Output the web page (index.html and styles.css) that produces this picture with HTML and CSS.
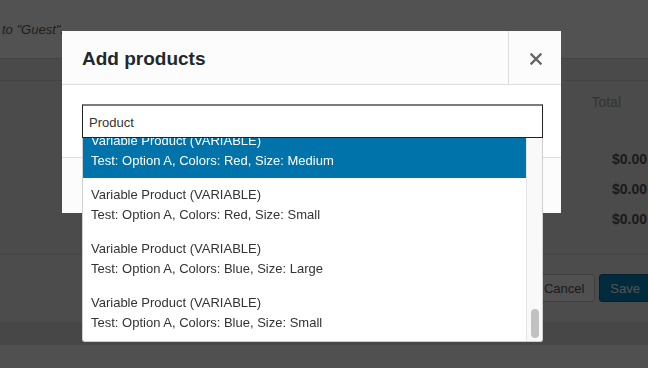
FILE: index.html
```html
<!DOCTYPE html>
<html>
<head>
    <title>Add products</title>
    <link rel="stylesheet" href="styles.css">
</head>
<body>
    <div class="page">
        <div class="page-top">
            <div class="note"><em>to "Guest".</em></div>
        </div>
        <div class="table-head"></div>
        <div class="items">
            <div class="row row-head"><span class="total-label">Total</span></div>
            <div class="row"><span class="price">$0.00</span></div>
            <div class="row"><span class="price">$0.00</span></div>
            <div class="row"><span class="price">$0.00</span></div>
        </div>
        <div class="actions">
            <button class="btn">Cancel</button>
            <button class="btn btn-primary">Save</button>
        </div>
        <div class="page-band"></div>
        <div class="page-bottom"></div>
    </div>

    <div class="backdrop"></div>

    <div class="modal">
        <div class="modal-head">
            <h1>Add products</h1>
            <button class="modal-close" aria-label="Close">
                <svg width="12" height="12" viewBox="0 0 12 12">
                    <path d="M1.5 1.5 L10.5 10.5 M10.5 1.5 L1.5 10.5" stroke="#666" stroke-width="2.4" stroke-linecap="square"/>
                </svg>
            </button>
        </div>
        <div class="modal-body">
            <div class="search">
                <input class="search-input" type="text" value="Product">
                <div class="results">
                    <ul class="results-list">
                        <li class="result is-active">Variable Product (VARIABLE)<br>Test: Option A, Colors: Red, Size: Medium</li>
                        <li class="result">Variable Product (VARIABLE)<br>Test: Option A, Colors: Red, Size: Small</li>
                        <li class="result">Variable Product (VARIABLE)<br>Test: Option A, Colors: Blue, Size: Large</li>
                        <li class="result">Variable Product (VARIABLE)<br>Test: Option A, Colors: Blue, Size: Small</li>
                    </ul>
                    <div class="scroll-track"><div class="scroll-thumb"></div></div>
                </div>
            </div>
        </div>
        <div class="modal-foot"></div>
    </div>
</body>
</html>
```

FILE: styles.css
```css
body {
    margin: 0;
    font-family: "Liberation Sans", Arial, sans-serif;
    font-size: 13px;
    color: #333;
}

/* Page behind the modal */
.page {
    width: 648px;
    height: 368px;
    overflow: hidden;
    background: #f7f7f7;
}
.page-top {
    height: 58px;
    background: #fff;
    padding: 22px 0 0 2px;
    box-sizing: border-box;
}
.note {
    white-space: nowrap;
    color: #5e5e5e;
    line-height: 16px;
}
.table-head {
    height: 21px;
    background: #e7e7e7;
    border-top: 1px solid #d4d4d4;
    border-bottom: 1px solid #d4d4d4;
}
.items {
    height: 174px;
    background: #eaeaea;
    border-bottom: 1px solid #d4d4d4;
    padding-top: 11px;
    box-sizing: border-box;
}
.row {
    display: flex;
    justify-content: flex-end;
    height: 30px;
    line-height: 30px;
}
.row-head {
    height: 20px;
    line-height: 20px;
    margin-bottom: 32px;
}
.total-label {
    margin-right: 27px;
    color: #a0a0a0;
    font-size: 14px;
}
.price {
    margin-right: 1px;
    font-size: 14px;
    font-weight: bold;
    color: #555;
}
.actions {
    height: 67px;
    background: #ededed;
    display: flex;
    justify-content: flex-end;
    align-items: flex-start;
    gap: 4px;
    padding-top: 19px;
    margin-right: -3px;
    box-sizing: border-box;
}
.btn {
    height: 28px;
    padding: 0 10px;
    border: 1px solid #c4c4c4;
    border-radius: 3px;
    background: #f7f7f7;
    color: #555;
    font-family: inherit;
    font-size: 13px;
}
.btn-primary {
    background: #0085ba;
    border-color: #006799;
    color: #fff;
}
.page-band {
    height: 23px;
    background: #dedede;
}
.page-bottom {
    height: 30px;
    background: #f7f7f7;
}

.backdrop {
    position: fixed;
    top: 0;
    left: 0;
    right: 0;
    bottom: 0;
    background: rgba(0, 0, 0, 0.68);
}

/* Modal */
.modal {
    position: absolute;
    left: 62px;
    top: 31px;
    width: 499px;
    background: #fff;
}
.modal-head {
    display: flex;
    height: 53px;
    background: #fcfcfc;
    border-bottom: 1px solid #dddddd;
}
.modal-head h1 {
    flex: 1;
    margin: 0;
    padding: 1px 0 0 20px;
    font-size: 19px;
    line-height: 54px;
    color: #23282d;
}
.modal-close {
    width: 53px;
    border: 0;
    border-left: 1px solid #dddddd;
    background: transparent;
    display: flex;
    align-items: center;
    justify-content: center;
    padding: 2px 0 0 2px;
}
.modal-body {
    padding: 19px 18px 19px 20px;
}
.search {
    position: relative;
}
.search-input {
    display: block;
    width: 100%;
    height: 34px;
    box-sizing: border-box;
    margin: 0;
    padding: 1px 6px 0;
    border: 1px solid #222;
    border-top: 2px solid #7c7c7c;
    font-family: inherit;
    font-size: 13px;
    color: #333;
    outline: none;
}
.modal-foot {
    height: 55px;
    background: #fcfcfc;
    border-top: 1px solid #dddddd;
}

/* Product results dropdown */
.results {
    position: absolute;
    top: 100%;
    left: 0;
    right: 0;
    height: 203px;
    display: flex;
    background: #fff;
    border: 1px solid #cfcfcf;
    border-top: 0;
    border-radius: 0 0 3px 3px;
    overflow: hidden;
    z-index: 2;
}
.results-list {
    flex: 1;
    margin: 0;
    padding: 0;
    list-style: none;
    overflow: hidden;
}
.result {
    padding: 7px 8px;
    line-height: 20px;
    white-space: nowrap;
    color: #333;
}
.result:first-child {
    margin-top: -14px;
}
.result.is-active {
    background: #0073aa;
    color: #fff;
}
.scroll-track {
    width: 15px;
    background: #f9f9f9;
    border-left: 1px solid #e6e6e6;
    display: flex;
    flex-direction: column;
    justify-content: flex-end;
    align-items: center;
    padding-bottom: 3px;
}
.scroll-thumb {
    width: 8px;
    height: 29px;
    border-radius: 4px;
    background: #c1c1c1;
}
```
